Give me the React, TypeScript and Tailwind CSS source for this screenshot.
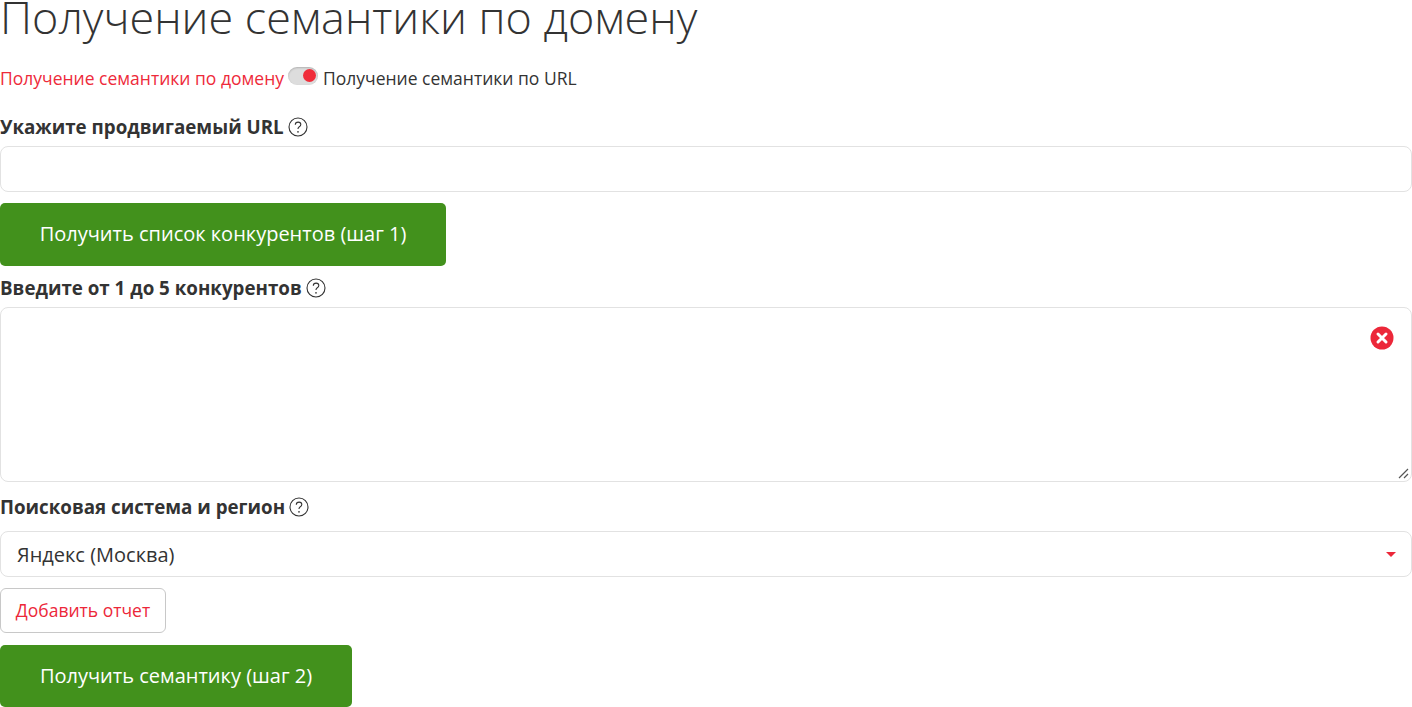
const font = { fontFamily: '"Open Sans", sans-serif' };

function Help() {
    return (
        <svg width="20" height="20" viewBox="0 0 20 20" className="shrink-0 text-[#333333]">
            <circle cx="10" cy="10" r="9" fill="none" stroke="currentColor" strokeWidth="1.1"/>
            <path d="M7.3 7.8c0-1.6 1.2-2.7 2.8-2.7s2.7 1 2.7 2.4c0 1.1-.6 1.6-1.5 2.2-.9.6-1.3 1.1-1.3 2v.4" fill="none" stroke="currentColor" strokeWidth="1.1"/>
            <circle cx="10" cy="14.8" r=".85" fill="currentColor"/>
        </svg>
    );
}

function Label({text}: {text: string}) {
    return (
        <div className="flex items-center gap-[4px] h-[24px] text-[18.75px] font-bold text-[#333333] leading-[24px]">
            {text}
            <Help/>
        </div>
    );
}

export default function App() {
    return (
        <div className="w-[1412px] h-[707px] overflow-hidden bg-white text-[#333333] text-[17.5px]" style={font}>
            <h1 className="-mt-[13px] h-[62px] text-[44.9px] font-light leading-[60px] text-[#333333]">
                Получение семантики по домену
            </h1>

            <div className="mt-[17px] flex items-center h-[24px] leading-[24px]">
                <span className="text-[#ee2a3a]">Получение семантики по домену</span>
                <span className="ml-[4px] mr-[5px] -mt-[5px] flex items-center justify-end w-[30px] h-[18px] rounded-[9px] bg-[#dddddd] shadow-[inset_0_1px_2px_rgba(0,0,0,0.2)] pr-[2px]">
                    <span className="w-[13px] h-[13px] rounded-full bg-[#f02d3a]"/>
                </span>
                <span>Получение семантики по URL</span>
            </div>

            <div className="mt-[25px]"><Label text="Укажите продвигаемый URL"/></div>
            <input className="mt-[7px] block w-full h-[46px] rounded-[8px] border border-[#e2e2e2] bg-white outline-none"/>

            <button className="mt-[11px] block h-[63px] w-[446px] pb-[2px] rounded-[5px] bg-[#42911c] text-white text-[20px]">
                Получить список конкурентов (шаг 1)
            </button>

            <div className="mt-[10px]"><Label text="Введите от 1 до 5 конкурентов"/></div>
            <div className="relative mt-[7px]">
                <textarea className="block w-full h-[175px] resize-none rounded-[8px] border border-[#e2e2e2] bg-white outline-none"/>
                <svg width="24" height="24" viewBox="0 0 24 24" className="absolute right-[18px] top-[19px]">
                    <circle cx="12" cy="12" r="11.5" fill="#ec2739"/>
                    <path d="M8 8l8 8M16 8l-8 8" stroke="#fff" strokeWidth="3" strokeLinecap="round"/>
                </svg>
                <svg width="12" height="12" viewBox="0 0 12 12" className="absolute right-[2px] bottom-[3px]">
                    <path d="M1 11L10 2M6 11l4-4" fill="none" stroke="#555555" strokeWidth="1.2"/>
                </svg>
            </div>

            <div className="mt-[13px]"><Label text="Поисковая система и регион"/></div>
            <div className="mt-[12px] flex items-center justify-between h-[46px] rounded-[8px] border border-[#e2e2e2] pl-[16px] pr-[15px] text-[20px]">
                <span className="pt-[2px]">Яндекс (Москва)</span>
                <span className="w-0 h-0 border-x-[5px] border-x-transparent border-t-[5px] border-t-[#ec2739]"/>
            </div>

            <button className="mt-[11px] block h-[45px] w-[166px] rounded-[6px] border border-[#c8c8c8] bg-white text-[#ec2739]">
                Добавить отчет
            </button>

            <button className="mt-[12px] block h-[62px] w-[352px] rounded-[5px] bg-[#42911c] text-white text-[20px]">
                Получить семантику (шаг 2)
            </button>
        </div>
    );
}
